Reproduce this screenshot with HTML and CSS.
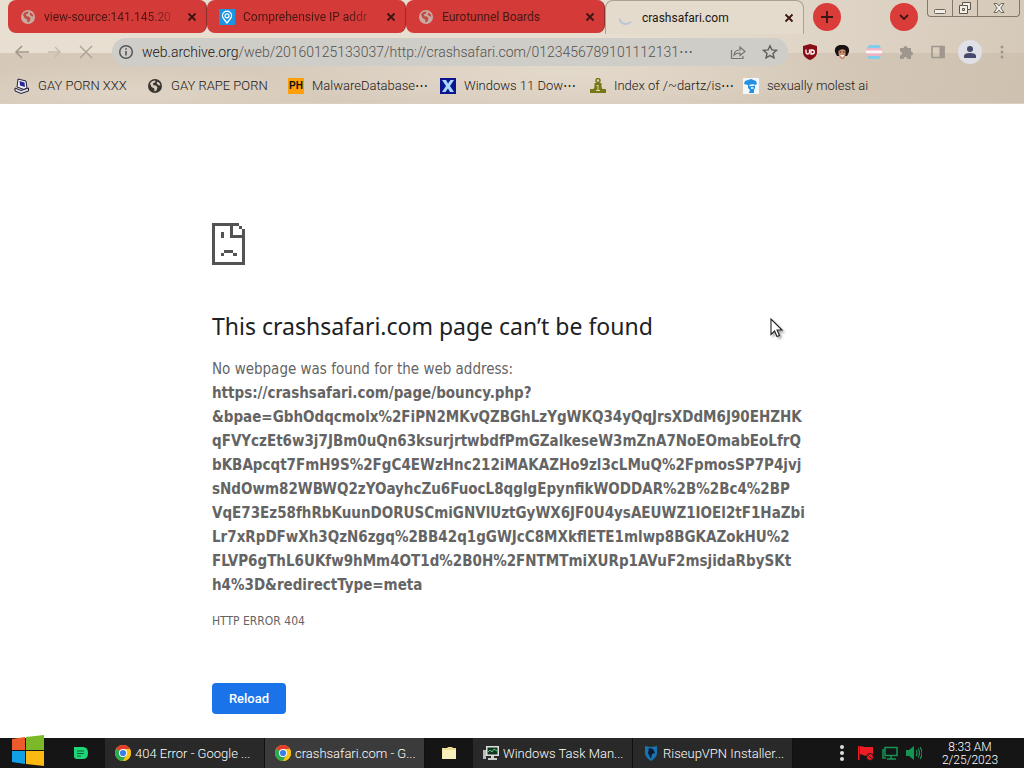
FILE: index.html
```
<!DOCTYPE html>
<html lang="en">
<head>
    <meta charset="UTF-8">
    <meta name="viewport" content="width=device-width, initial-scale=1.0">
    <title>crashsafari.com</title>
    <link rel="stylesheet" href="styles.css">
</head>
<body>
    <svg class="defs" aria-hidden="true">
        <symbol id="globe" viewBox="0 0 16 16">
            <circle cx="8" cy="8" r="7" fill="currentColor"/>
            <path class="land" d="M3 5.5C4 3.5 6 2.4 8.500 2.500L8 4.500 5.800 5.600 6.500 7.200 9 7.500 10.500 9.500 9.500 12.500 7.500 13.500 7.200 10.500 4.500 9zM10 3.500l2.500 1.500 1 2.500-2-.3-1.800-1.700z"/>
        </symbol>
        <symbol id="close" viewBox="0 0 10 10">
            <path d="M1.500 1.500l7 7M8.500 1.500l-7 7" stroke="currentColor" stroke-width="1.800"/>
        </symbol>
        <symbol id="chrome" viewBox="0 0 16 16">
            <circle cx="8" cy="8" r="8" fill="#fbc116"/>
            <path d="M8 8L1.100 4A8 8 0 0 1 14.900 4z" fill="#e33b2e"/>
            <path d="M8 8L1.100 4A8 8 0 0 0 8 16l3.500-6z" fill="#2da94f"/>
            <path d="M8 4h6.900A8 8 0 0 1 8 16l3.500-6z" fill="#fbc116"/>
            <circle cx="8" cy="8" r="4" fill="#fff"/>
            <circle cx="8" cy="8" r="3.100" fill="#3b7de9"/>
        </symbol>
    </svg>

    <header class="browser">
        <div class="tab-strip">
            <div class="tab">
                <svg class="favicon"><use href="#globe"/></svg>
                <span class="tab-title fade">view-source:141.145.20</span>
                <button class="tab-close" aria-label="Close tab"><svg><use href="#close"/></svg></button>
            </div>
            <div class="tab">
                <svg class="favicon" viewBox="0 0 16 16">
                    <rect width="16" height="16" fill="#1b94e4"/>
                    <path d="M8 14L4.500 9.500a4.500 4.500 0 1 1 7 0z" fill="none" stroke="#fff" stroke-width="1.300"/>
                    <circle cx="8" cy="6.800" r="2" fill="none" stroke="#fff" stroke-width="1.200"/>
                </svg>
                <span class="tab-title fade">Comprehensive IP addr</span>
                <button class="tab-close" aria-label="Close tab"><svg><use href="#close"/></svg></button>
            </div>
            <div class="tab">
                <svg class="favicon"><use href="#globe"/></svg>
                <span class="tab-title">Eurotunnel Boards</span>
                <button class="tab-close" aria-label="Close tab"><svg><use href="#close"/></svg></button>
            </div>
            <div class="tab active">
                <svg class="favicon" viewBox="0 0 16 16">
                    <path d="M1.500 8.500a6.500 6.500 0 0 0 11.500 3" fill="none" stroke="#bcc6d8" stroke-width="2"/>
                </svg>
                <span class="tab-title">crashsafari.com</span>
                <button class="tab-close" aria-label="Close tab"><svg><use href="#close"/></svg></button>
            </div>
            <button class="round-btn" aria-label="New tab">
                <svg viewBox="0 0 14 14"><path d="M7 1v12M1 7h12" stroke="#3a1614" stroke-width="1.800"/></svg>
            </button>
            <button class="round-btn search-tabs" aria-label="Search tabs">
                <svg viewBox="0 0 14 14"><path d="M3 5l4 4 4-4" fill="none" stroke="#3a1614" stroke-width="1.800"/></svg>
            </button>
            <div class="window-controls">
                <button aria-label="Minimize"><svg viewBox="0 0 16 14"><rect x="2.500" y="8.500" width="11" height="4" rx="1" fill="#f4efe6" stroke="#6d665e"/></svg></button>
                <button aria-label="Restore"><svg viewBox="0 0 16 14"><path d="M5.500 1.500h8v7h-3v4h-8v-8h3z" fill="#f4efe6" stroke="#5c554d"/><path d="M5.500 4.500h5v4M5.500 7.500h2v2h-2z" fill="none" stroke="#5c554d"/></svg></button>
                <button class="wide" aria-label="Close"><svg viewBox="0 0 16 14"><path d="M3 2.500h3l2 2.500 2-2.500h3L9.800 7l3.200 4.500h-3L8 9l-2 2.500H3L6.200 7z" fill="#f4efe6" stroke="#6d665e"/></svg></button>
            </div>
        </div>

        <div class="toolbar">
            <button class="nav-btn" aria-label="Back"><svg viewBox="0 0 16 16"><path d="M15 8H2M8 2L2 8l6 6" fill="none" stroke="#a1988d" stroke-width="1.600"/></svg></button>
            <button class="nav-btn" aria-label="Forward"><svg viewBox="0 0 16 16"><path d="M2 8h12M9 3l5 5-5 5" fill="none" stroke="#c8bdb0" stroke-width="1.600"/></svg></button>
            <button class="nav-btn" aria-label="Stop"><svg viewBox="0 0 16 16"><path d="M2 2l12 12M14 2L2 14" stroke="#aba297" stroke-width="1.400"/></svg></button>
            <div class="omnibox">
                <svg class="info" viewBox="0 0 16 16"><circle cx="8" cy="8" r="6.300" fill="none" stroke="#55565a" stroke-width="1.500"/><path d="M8 7v4.500M8 4.200v1.600" stroke="#55565a" stroke-width="1.600"/></svg>
                <a class="url" href="#"><span class="host">web.archive.org</span>/web/20160125133037/http://crashsafari.com/0123456789101112131⋯</a>
                <button aria-label="Share"><svg viewBox="0 0 16 16"><path d="M1.500 6v8.500H13V12M4 11c.5-3.500 3-5 6-5V3l5 4.500-5 4V9c-3 0-4.500.5-6 2z" fill="none" stroke="#77756f" stroke-width="1.200"/></svg></button>
                <button aria-label="Bookmark this page"><svg viewBox="0 0 16 16"><path d="M8 1.800l1.900 4.100 4.500.5-3.400 3 1 4.500L8 11.600 4 13.900l1-4.500-3.400-3 4.500-.5z" fill="none" stroke="#5f5e5a" stroke-width="1.400"/></svg></button>
            </div>
            <div class="extensions">
                <button aria-label="uBlock Origin">
                    <svg viewBox="0 0 16 16"><path d="M8 0l7 2v6c0 4-3 6.500-7 8-4-1.500-7-4-7-8V2z" fill="#870e16"/><path d="M4 5.500v3q0 1.500 1.700 1.500T7.500 8.500v-3M9 6v4h1q2.300 0 2.300-2T10 6z" fill="none" stroke="#fff" stroke-width="1.300"/></svg>
                </button>
                <button aria-label="Portrait extension">
                    <svg viewBox="0 0 16 16"><path d="M1 8C0 3 4 .5 8 1c4-.5 8 2 7 7l-2 4H3z" fill="#17110f"/><path d="M4.500 7Q8 4 11.500 6.500v4Q11 15 8 15.500 5 14 4.500 10z" fill="#c98f70"/><path d="M5.800 8h1.500M9 8h1.500" stroke="#392019"/><path d="M6 11h4.500L8.500 13.500z" fill="#fff"/></svg>
                </button>
                <button aria-label="Flag extension">
                    <svg viewBox="0 0 16 16"><path d="M3 1h10l2 3H1z" fill="#82cdea"/><path d="M1 4h14l1 3H0z" fill="#efb3c7"/><path d="M0 6.500h16v3H0z" fill="#faf6f5"/><path d="M0 9.500h16L15 12H1z" fill="#efb3c7"/><path d="M1 12h14l-2 3H3z" fill="#82cdea"/></svg>
                </button>
                <button aria-label="Extensions">
                    <svg viewBox="0 0 16 16"><path d="M2 4h3.500a2 2 0 1 1 4 0H13v3.500a2 2 0 1 1 0 4V15H9.500a2 2 0 1 0-4 0H2v-3.500a2 2 0 1 0 0-4z" fill="#9f978d"/></svg>
                </button>
                <button aria-label="Side panel">
                    <svg viewBox="0 0 16 16"><path d="M2 2.500h12v11H2z" fill="none" stroke="#9f978d" stroke-width="1.600"/><path d="M9.500 2h5v12h-5z" fill="#9f978d"/></svg>
                </button>
                <button class="profile" aria-label="Profile">
                    <svg viewBox="0 0 16 16"><circle cx="8" cy="5" r="3" fill="#45496a"/><path d="M2 14v-2q0-3 6-3t6 3v2z" fill="#45496a"/></svg>
                </button>
                <button aria-label="Menu">
                    <svg viewBox="0 0 16 16"><g fill="#9f978d"><circle cx="8" cy="3" r="1.500"/><circle cx="8" cy="8" r="1.500"/><circle cx="8" cy="13" r="1.500"/></g></svg>
                </button>
            </div>
        </div>

        <nav class="bookmarks">
            <a href="#">
                <svg viewBox="0 0 16 16"><path d="M4 1l8 2 1 7-3 1.500-7-2.500z" fill="#eeeef4" stroke="#222035"/><path d="M5.500 3l5 1.500.5 4.500-5-1.500z" fill="#2b269c"/><path d="M1 10l6 2.500L14.500 10v3L7 15.500 1 13z" fill="#dcdce6" stroke="#222035"/></svg>
                <span>GAY PORN XXX</span>
            </a>
            <a href="#" class="dark-globe">
                <svg><use href="#globe"/></svg>
                <span>GAY RAPE PORN</span>
            </a>
            <a href="#">
                <span class="ph">PH</span>
                <span>MalwareDatabase⋯</span>
            </a>
            <a href="#">
                <svg viewBox="0 0 16 16"><rect width="16" height="16" fill="#0a1590"/><path d="M2 2h4l2 3.500L10.500 2H14l-4 6 4 6h-4l-2-3.500L5.500 14H2l4-6z" fill="#a8d8fa"/></svg>
                <span>Windows 11 Dow⋯</span>
            </a>
            <a href="#">
                <svg viewBox="0 0 16 16"><circle cx="8" cy="2.500" r="2" fill="none" stroke="#767717" stroke-width="1.500"/><path d="M4.500 5h7v4l1 2H16v4H0v-4h3.500l1-2z" fill="#767717"/><path d="M8 7v5M6.500 7.500H8M6 12.500h4" stroke="#dfd8ac"/></svg>
                <span>Index of /~dartz/is⋯</span>
            </a>
            <a href="#">
                <svg viewBox="0 0 16 16"><rect width="16" height="16" fill="#f4f7fa"/><path d="M2 3l6-2 5 2 1 3-2 1v3l-1 2v3H6l1-3-2-2V7L1 6z" fill="#2390e2"/><path d="M6.500 7.500l5-.5M8 10h2.500" stroke="#fff" stroke-width="1.300"/></svg>
                <span>sexually molest ai</span>
            </a>
        </nav>
    </header>

    <main class="page">
        <div class="error-content">
            <svg class="sad-page" viewBox="0 0 33 42" shape-rendering="crispEdges" aria-hidden="true">
                <path fill="#535353" d="M0 0h27v3H3v36h27V15H18V3h3v9h9V6h3v36H0zM27 3h3v3h-3zM9 9h3v6H9zM12 27h9v3h-9zM9 30h3v3H9zM21 30h4v3h-4z"/>
            </svg>
            <h1>This crashsafari.com page can’t be found</h1>
            <p class="message">No webpage was found for the web address:
                <strong class="address">https://crashsafari.com/page/bouncy.php?<br>&amp;bpae=GbhOdqcmolx%2FiPN2MKvQZBGhLzYgWKQ34yQqJrsXDdM6J90EHZHK<br>qFVYczEt6w3j7JBm0uQn63ksurjrtwbdfPmGZalkeseW3mZnA7NoEOmabEoLfrQ<br>bKBApcqt7FmH9S%2FgC4EWzHnc212iMAKAZHo9zl3cLMuQ%2FpmosSP7P4jvj<br>sNdOwm82WBWQ2zYOayhcZu6FuocL8qglgEpynfikWODDAR%2B%2Bc4%2BP<br>VqE73Ez58fhRbKuunDORUSCmiGNVlUztGyWX6JF0U4ysAEUWZ1IOEl2tF1HaZbi<br>Lr7xRpDFwXh3QzN6zgq%2BB42q1gGWJcC8MXkflETE1mlwp8BGKAZokHU%2<br>FLVP6gThL6UKfw9hMm4OT1d%2B0H%2FNTMTmiXURp1AVuF2msjidaRbySKt<br>h4%3D&amp;redirectType=meta</strong>
            </p>
            <p class="error-code">HTTP ERROR 404</p>
            <button class="reload">Reload</button>
        </div>
        <svg class="cursor" viewBox="0 0 14 20" aria-hidden="true"><path d="M1 1v15.500l3.600-3.500 2.400 5.500 2.500-1-2.400-5.500H12z" fill="#fff" stroke="#222" stroke-width="1.100"/></svg>
    </main>

    <footer class="taskbar">
        <button class="start" aria-label="Start">
            <svg viewBox="0 0 32 32"><path d="M0 4l13-2v13H0z" fill="#ed5a2c"/><path d="M14 2l18-2v15H14z" fill="#7cb928"/><path d="M0 16h13v13L0 27z" fill="#129fe6"/><path d="M14 16h18v15l-18-2z" fill="#fbb912"/></svg>
        </button>
        <button class="pinned" aria-label="Notes">
            <svg viewBox="0 0 16 16"><path d="M1 2h9q5 0 5 6t-5 6H4q-3 0-3-3z" fill="#1ed577"/><path d="M4 6h7M4 8.500h7M4 11h4" stroke="#12613d" stroke-width="1.200"/></svg>
        </button>
        <button class="task">
            <svg><use href="#chrome"/></svg>
            <span>404 Error - Google ...</span>
        </button>
        <button class="task current">
            <svg><use href="#chrome"/></svg>
            <span>crashsafari.com - G...</span>
        </button>
        <button class="pinned folder" aria-label="File Explorer">
            <svg viewBox="0 0 16 16"><path d="M1 3h5l1-1h4l1 1h3v11H1z" fill="#eddf98"/><path d="M2 5h13v9H1z" fill="#f7f0bd"/></svg>
        </button>
        <button class="task">
            <svg viewBox="0 0 16 16"><path d="M0 5h3v9H0z" fill="#b9beb9"/><path d="M3 1h13v10H3z" fill="#dde1dc"/><path d="M4.500 2.500h10v7h-10z" fill="#143520"/><path d="M5 7l2-2 2 2 2-3 3 2" fill="none" stroke="#5ec582"/><path d="M8 11h3v2h3v2H5v-2h3z" fill="#c9cdc8"/></svg>
            <span>Windows Task Man...</span>
        </button>
        <button class="task">
            <svg viewBox="0 0 16 16"><path d="M2 1l6 1 6-1v8q-1 4-6 7-5-3-6-7z" fill="#1873b0"/><path d="M6 3l4 1 2 4-3 1-1 5-3-6z" fill="#0b1c30"/></svg>
            <span>RiseupVPN Installer...</span>
        </button>
        <div class="tray">
            <svg viewBox="0 0 16 16"><g fill="#ddd"><circle cx="8" cy="2" r="2"/><circle cx="8" cy="8" r="2"/><circle cx="8" cy="14" r="2"/></g></svg>
            <svg viewBox="0 0 16 16"><path d="M0 1h1.500v14H0zM2 1l5 1h8v9H8L2 9z" fill="#ee1c25"/><circle cx="12" cy="12" r="3.500" fill="#ee1c25" stroke="#171717"/><path d="M10.500 10.500l3 3" stroke="#171717"/></svg>
            <svg viewBox="0 0 16 16"><path d="M3 2.500h12v8H3zM9 10.500v3M5 14h9M3 5H1v8h3" fill="none" stroke="#169454" stroke-width="1.500"/></svg>
            <svg viewBox="0 0 16 16"><path d="M0 5h3l5-4v14l-5-4H0z" fill="#169454"/><path d="M10 5q2 3 0 6M12 3.500q3 4.500 0 9M14 2q4 6 0 12" fill="none" stroke="#169454" stroke-width="1.200"/></svg>
        </div>
        <div class="clock">
            <div>8:33 AM</div>
            <div>2/25/2023</div>
        </div>
    </footer>
</body>
</html>
```
FILE: styles.css
```
* {
    margin: 0;
    padding: 0;
    box-sizing: border-box;
}

body {
    display: flex;
    flex-direction: column;
    min-height: 100vh;
    font-family: Roboto, sans-serif;
    font-size: 13px;
    font-weight: 300;
    color: #1c1714;
    background: #fff;
}

button {
    display: flex;
    align-items: center;
    justify-content: center;
    border: none;
    background: none;
    font: inherit;
    color: inherit;
}

a {
    color: inherit;
    text-decoration: none;
}

svg {
    display: block;
    flex: none;
    width: 16px;
    height: 16px;
}

.defs {
    position: absolute;
    width: 0;
    height: 0;
}

.browser {
    background:
        linear-gradient(90deg, rgba(240, 233, 220, 0.7), rgba(240, 233, 220, 0.6) 60%, rgba(240, 233, 220, 0.2)) top / 100% 53px no-repeat,
        radial-gradient(ellipse 300px 40px at 55% 70%, #e3d9ca, transparent),
        radial-gradient(ellipse 200px 30px at 12% 90%, #dfd4c5, transparent),
        linear-gradient(100deg, #d5c8b9, #d9cdbe 60%, #cec1b0);
    border-bottom: 1px solid #d9d0c4;
}

/* Tabs */
.tab-strip {
    display: flex;
    align-items: stretch;
    height: 34px;
    padding-left: 8px;
    padding-right: 4px;
}

.tab {
    display: flex;
    align-items: center;
    flex: 0 1 199px;
    min-width: 0;
    height: 33px;
    padding: 0 6px 0 12px;
    gap: 8px;
    background: #d43b38;
    color: #4c1612;
    font-size: 12px;
    font-weight: 400;
    border-radius: 8px;
    border-right: 1px solid #8e3029;
}

.tab.active {
    height: 34px;
    background: #e4dbcd;
    color: #1c1714;
    border: 1px solid #aaa096;
    border-bottom: none;
    border-radius: 8px 8px 0 0;
}

.tab .favicon {
    color: #c9aaa2;
}

.land {
    fill: var(--land, #c34a43);
}

.tab-title {
    flex: 1;
    min-width: 0;
    white-space: nowrap;
}

.tab-title.fade {
    mask-image: linear-gradient(to right, #000 80%, rgba(0, 0, 0, 0.2));
}

.tab-close {
    width: 16px;
    height: 16px;
    color: #3a1614;
}

.tab-close svg {
    width: 10px;
    height: 10px;
}

.round-btn {
    flex: none;
    width: 28px;
    height: 28px;
    margin: 3px 0 0 9px;
    border-radius: 50%;
    background: #d93c39;
}

.round-btn svg {
    width: 14px;
    height: 14px;
}

.search-tabs {
    margin-left: auto;
}

.window-controls {
    display: flex;
    height: 17px;
    margin-left: 9px;
    border: 1px solid #81786d;
    border-top: none;
    border-radius: 0 0 4px 4px;
}

.window-controls button {
    width: 25px;
    border-right: 1px solid #81786d;
}

.window-controls .wide {
    width: 41px;
    border-right: none;
}

.window-controls svg {
    height: 14px;
}

/* Toolbar */
.toolbar {
    display: flex;
    align-items: center;
    height: 36px;
    padding: 0 10px 0 6px;
}

.nav-btn {
    width: 32px;
    height: 32px;
}

.omnibox {
    display: flex;
    align-items: center;
    flex: 1;
    min-width: 0;
    height: 28px;
    margin-left: 10px;
    padding: 0 10px 0 6px;
    gap: 16px;
    border-radius: 14px;
    background: #cfcdc8;
}

.url {
    flex: 1;
    min-width: 0;
    margin-left: -8px;
    overflow: hidden;
    white-space: nowrap;
    font-size: 14px;
    color: #55524e;
}

.host {
    color: #1c1714;
}

.extensions {
    display: flex;
    align-items: center;
    gap: 8px;
    margin-left: 10px;
}

.extensions button {
    width: 24px;
    height: 24px;
}

.extensions .profile {
    border-radius: 50%;
    background: #dfdfe6;
}

/* Bookmarks */
.bookmarks {
    display: grid;
    grid-template-columns: 133px 141px 152px 150px 153px auto;
    align-items: center;
    height: 33px;
    padding-left: 14px;
    padding-bottom: 2px;
}

.bookmarks a {
    display: flex;
    align-items: center;
    gap: 8px;
    white-space: nowrap;
}

.dark-globe {
    --land: #d8cbbb;
}

.dark-globe svg {
    color: #373431;
}

.ph {
    width: 16px;
    height: 16px;
    font: bold 10px/16px "Liberation Sans", sans-serif;
    text-align: center;
    background: #ff9f0a;
    color: #111;
}

/* Error page */
.page {
    position: relative;
    flex: 1;
    font-family: "DejaVu Sans Condensed", "Noto Sans", sans-serif;
    font-weight: 400;
    color: #646464;
}

.error-content {
    width: 600px;
    max-width: 100%;
    margin: 0 auto;
    padding-top: 119px;
}

.sad-page {
    width: 33px;
    height: 42px;
}

.error-content h1 {
    margin-top: 45px;
    font-family: "Noto Sans", sans-serif;
    font-size: 23px;
    line-height: 32px;
    font-weight: 400;
    color: #202124;
}

.message {
    margin-top: 15px;
    font-size: 15px;
    line-height: 24px;
}

.address {
    display: block;
    white-space: nowrap;
}

.error-code {
    margin-top: 12px;
    font-size: 12px;
    line-height: 24px;
}

.reload {
    width: 74px;
    height: 31px;
    margin-top: 50px;
    border-radius: 4px;
    background: #1a73e8;
    color: #fff;
    font-family: Roboto, sans-serif;
    font-size: 13px;
    font-weight: 500;
}

.cursor {
    position: absolute;
    left: 770px;
    top: 214px;
    width: 14px;
    height: 20px;
    filter: drop-shadow(2px 2px 1px #aaa);
}

/* Taskbar */
.taskbar {
    display: flex;
    align-items: stretch;
    height: 30px;
    background: #151515;
    color: #fff;
}

.start {
    width: 57px;
    margin-top: -4px;
    padding-right: 2px;
}

.start svg {
    width: 32px;
    height: 32px;
}

.pinned {
    width: 48px;
}

.task {
    flex: 0 1 160px;
    min-width: 0;
    justify-content: flex-start;
    gap: 4px;
    padding-left: 10px;
    background: #292929;
    border-right: 1px solid #111;
    white-space: nowrap;
}

.task.current {
    background: #3b3b3b;
}

.task span {
    overflow: hidden;
}

.tray {
    display: flex;
    align-items: center;
    gap: 8px;
    margin-left: auto;
}

.clock {
    width: 102px;
    padding: 3px 6px 0 0;
    font-size: 12px;
    line-height: 13px;
    text-align: center;
}
```
